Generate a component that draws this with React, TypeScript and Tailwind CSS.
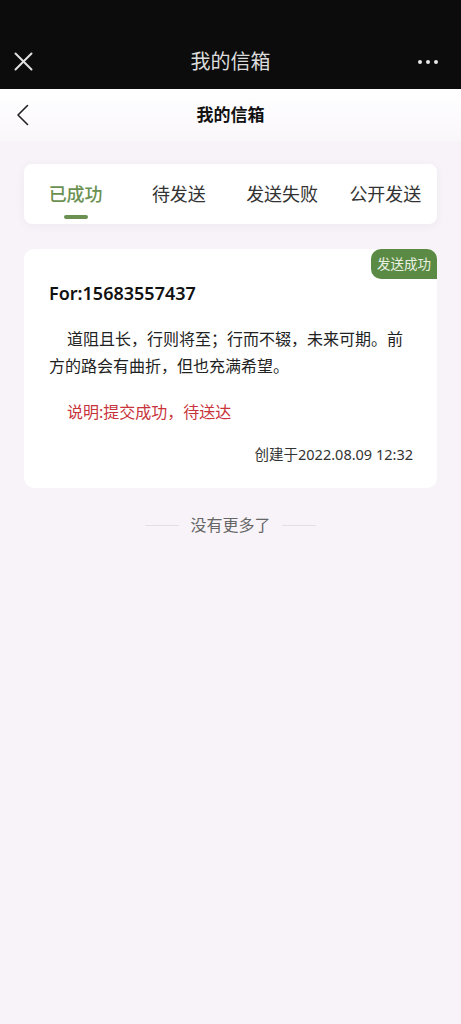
export default function App() {
  const tabs = ["已成功", "待发送", "发送失败", "公开发送"];

  return (
    <div
      className="min-h-[1024px] bg-[#f7f3f8] text-[#222]"
      style={{ fontFamily: '"Noto Sans", "Noto Sans CJK SC", sans-serif' }}
    >
      {/* Top bar */}
      <div className="h-[89px] bg-[#0c0c0c] pt-[34px]">
        <div className="relative flex h-[55px] items-center justify-between px-[14px]">
          <svg width="19" height="19" viewBox="0 0 19 19" fill="none">
            <path d="M1.5 1.5L17.5 17.5M17.5 1.5L1.5 17.5" stroke="#e2e2e2" strokeWidth="2" strokeLinecap="round" />
          </svg>
          <div className="absolute left-0 right-0 text-center text-[20px] text-[#dcdcdc]">我的信箱</div>
          <div className="mr-[9px] flex gap-[4px]">
            <span className="h-[4px] w-[4px] rounded-full bg-[#e8e8e8]" />
            <span className="h-[4px] w-[4px] rounded-full bg-[#e8e8e8]" />
            <span className="h-[4px] w-[4px] rounded-full bg-[#e8e8e8]" />
          </div>
        </div>
      </div>

      {/* Page header */}
      <div className="relative flex h-[52px] items-center bg-gradient-to-b from-white to-[#faf7fb] px-[16px]">
        <svg width="13" height="22" viewBox="0 0 13 22" fill="none">
          <path d="M11.5 1.5L2 11L11.5 20.5" stroke="#222" strokeWidth="1.6" strokeLinecap="round" strokeLinejoin="round" />
        </svg>
        <div className="absolute left-0 right-0 text-center text-[17px] font-bold text-[#111]">我的信箱</div>
      </div>

      {/* Tabs */}
      <div className="mx-[24px] mt-[23px] grid h-[60px] grid-cols-4 rounded-[8px] bg-white shadow-[0_2px_8px_rgba(150,120,170,0.08)]">
        {tabs.map((t, i) => (
          <div key={t} className="relative flex items-center justify-center">
            <span className={i === 0 ? "text-[18px] font-medium text-[#6b9152]" : "text-[18px] text-[#333]"}>{t}</span>
            {i === 0 && (
              <span className="absolute bottom-[5px] h-[4px] w-[24px] rounded-full bg-[#6b9152]" />
            )}
          </div>
        ))}
      </div>

      {/* Letter card */}
      <div className="relative mx-[24px] mt-[25px] rounded-[10px] bg-white pb-[23px] pl-[25px] pr-[24px] pt-[31px]">
        <div className="absolute right-0 top-0 flex h-[30px] w-[66px] items-center justify-center rounded-bl-[10px] rounded-tl-[10px] rounded-tr-[10px] bg-[#5b8a45] text-[13.5px] text-[#e9f1e3]">
          发送成功
        </div>
        <div className="text-[18px] font-semibold leading-[26px] text-[#111]">For:15683557437</div>
        <p className="mt-[20px] pr-[4px] text-[16px] leading-[27px] text-[#222] [text-indent:18px]">
          道阻且长，行则将至；行而不辍，未来可期。前方的路会有曲折，但也充满希望。
        </p>
        <div className="mt-[20px] pl-[18px] text-[16px] leading-[24px] text-[#c8333a]">说明:提交成功，待送达</div>
        <div className="mt-[19px] text-right text-[14.5px] leading-[22px] text-[#333]">创建于2022.08.09 12:32</div>
      </div>

      {/* End of list */}
      <div className="mt-[26px] flex items-center justify-center gap-[11px]">
        <span className="h-px w-[34px] bg-[#e4dfe6]" />
        <span className="text-[16px] leading-[22px] text-[#666]">没有更多了</span>
        <span className="h-px w-[34px] bg-[#e4dfe6]" />
      </div>
    </div>
  );
}
